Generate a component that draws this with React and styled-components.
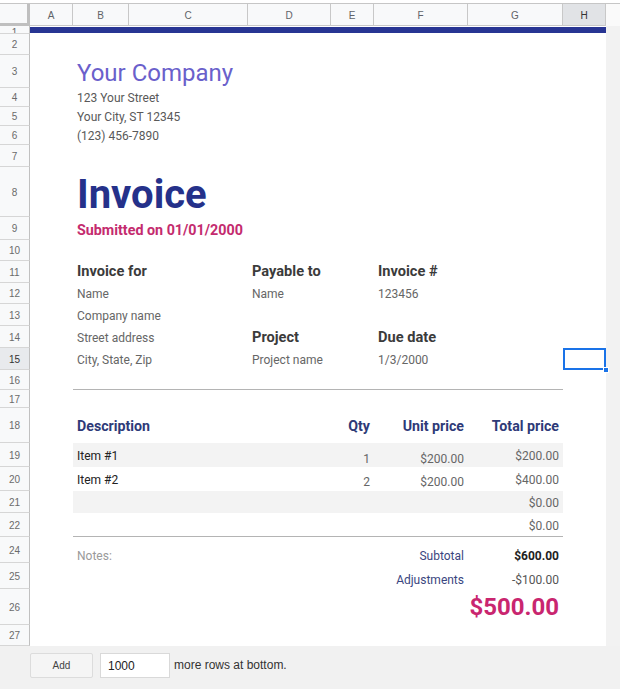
import React from 'react';
import styled, { createGlobalStyle } from 'styled-components';

const Global = createGlobalStyle`
  html, body { margin: 0; padding: 0; background: #fff; }
  body {
    width: 620px; height: 689px; overflow: hidden;
    font-family: Roboto, "Liberation Sans", Arial, sans-serif;
  }
  * { box-sizing: border-box; }
`;

const COLS = [30, 43, 56, 119, 83, 43, 94, 95, 43, 14];
const ROWS = [4, 22, 8, 21, 33, 19, 19, 19, 22, 50, 23, 21, 22, 21, 22, 22, 22, 20, 18, 35, 24, 24, 22, 24, 26, 26, 36, 21, 43];
const ROW_LABELS = [1, 2, 3, 4, 5, 6, 7, 8, 9, 10, 11, 12, 13, 14, 15, 16, 17, 18, 19, 20, 21, 22, 24, 25, 26, 27];
const LETTERS = ['A', 'B', 'C', 'D', 'E', 'F', 'G', 'H'];
const COL = { A: 2, B: 3, C: 4, D: 5, E: 6, F: 7, G: 8, H: 9 };
const gr = (n) => (n <= 22 ? n + 2 : n + 1);

const Sheet = styled.div`
  display: grid;
  grid-template-columns: ${COLS.map((c) => `${c}px`).join(' ')};
  grid-template-rows: ${ROWS.map((r) => `${r}px`).join(' ')};
  width: 620px;
  height: 689px;
  background: #f1f1f1;
`;

const TopStrip = styled.div`
  grid-column: 1 / -1;
  grid-row: 1;
  background: #fff;
  border-bottom: 1px solid #c6c6c6;
`;

const Corner = styled.div`
  grid-column: 1;
  grid-row: 2;
  background: #f8f9fa;
  border-right: 3px solid #bfbfbf;
  border-bottom: 3px solid #bfbfbf;
`;

const ColHead = styled.div`
  grid-column: ${(p) => p.$col};
  grid-row: 2;
  display: flex;
  align-items: center;
  justify-content: center;
  background: ${(p) => (p.$active ? '#e1e3e6' : '#f8f9fa')};
  border-right: 1px solid #c8c8c8;
  border-bottom: 1px solid #c8c8c8;
  font-family: "Liberation Sans", Arial, sans-serif;
  font-size: 10px;
  color: ${(p) => (p.$active ? '#333' : '#5f6368')};
  padding-top: 1px;
`;

const GutterHead = styled.div`
  grid-column: 10;
  grid-row: 2;
  background: #fafafa;
`;

const RowHead = styled.div`
  grid-column: 1;
  grid-row: ${(p) => p.$row};
  display: flex;
  align-items: ${(p) => (p.$tiny ? 'flex-start' : 'center')};
  justify-content: center;
  overflow: hidden;
  padding-top: ${(p) => (p.$tiny ? '5px' : '1px')};
  line-height: ${(p) => (p.$tiny ? '3px' : 'normal')};
  background: ${(p) => (p.$active ? '#e8eaed' : '#f8f9fa')};
  border-right: 1px solid #c0c0c0;
  border-bottom: 1px solid #d6d6d6;
  font-family: "Liberation Sans", Arial, sans-serif;
  font-size: 10px;
  color: ${(p) => (p.$active ? '#333' : '#6b6b6b')};
`;

const Paper = styled.div`
  grid-column: 2 / 10;
  grid-row: 3 / 29;
  background: #fff;
`;

const Gutter = styled.div`
  grid-column: 10;
  grid-row: 3 / 29;
  background: #f2f2f2;
`;

const Banner = styled.div`
  grid-column: 2 / 10;
  grid-row: 3;
  margin-top: 1px;
  height: 6px;
  background: #283593;
`;

const Band = styled.div`
  grid-column: 3 / 9;
  grid-row: ${(p) => p.$row};
  background: #f3f3f3;
`;

const Rule = styled.div`
  grid-column: 3 / 9;
  grid-row: ${(p) => p.$row};
  border-bottom: 1px solid #b4b4b4;
`;

const Cell = styled.div`
  grid-column: ${(p) => p.$col};
  grid-row: ${(p) => p.$row};
  display: flex;
  align-items: ${(p) => (p.$v === 'bottom' ? 'flex-end' : 'center')};
  justify-content: ${(p) => (p.$right ? 'flex-end' : 'flex-start')};
  padding: ${(p) => (p.$pt != null ? `${p.$pt}px` : '2px')} 4px ${(p) => (p.$pb != null ? `${p.$pb}px` : '0')};
  white-space: nowrap;
  min-width: 0;
  line-height: 1.2;
`;

const CompanyName = styled.span`
  font-size: 24px;
  color: #6a60cb;
`;

const AddressLine = styled.span`
  font-size: 12px;
  color: #595959;
`;

const Title = styled.span`
  font-size: 40px;
  font-weight: 700;
  color: #25318a;
`;

const Submitted = styled.span`
  font-size: 14.3px;
  font-weight: 700;
  color: #c42b6e;
`;

const Label = styled.span`
  font-size: 14.6px;
  font-weight: 700;
  color: #3b3b3b;
`;

const Value = styled.span`
  font-size: 12px;
  color: #666;
`;

const ColTitle = styled.span`
  font-size: 14.2px;
  font-weight: 700;
  color: #2e3a78;
`;

const ItemText = styled.span`
  font-size: 12px;
  color: #222;
`;

const Num = styled.span`
  font-size: 12px;
  color: #666;
`;

const SumLabel = styled.span`
  font-size: 12px;
  color: #3a4680;
`;

const SumValue = styled.span`
  font-size: 12px;
  font-weight: ${(p) => (p.$bold ? 700 : 400)};
  color: ${(p) => (p.$bold ? '#222' : '#555')};
`;

const Grand = styled.span`
  font-size: 24px;
  font-weight: 700;
  color: #c9266f;
`;

const Note = styled.span`
  font-size: 12px;
  color: #9a9a9a;
`;

const Selection = styled.div`
  grid-column: 9;
  grid-row: ${gr(15)};
  position: relative;
  border: 2px solid #1a73e8;
`;

const Handle = styled.span`
  position: absolute;
  right: -5px;
  bottom: -5px;
  width: 6px;
  height: 6px;
  background: #1a73e8;
  border: 1px solid #fff;
`;

const BottomBar = styled.div`
  grid-column: 1 / -1;
  grid-row: 29;
  display: flex;
  align-items: flex-start;
  padding: 7px 0 0 30px;
  gap: 7px;
  background: #f1f1f1;
  font-family: "Liberation Sans", Arial, sans-serif;
`;

const AddButton = styled.div`
  width: 63px;
  height: 25px;
  display: flex;
  align-items: center;
  justify-content: center;
  background: #f5f5f5;
  border: 1px solid #dcdcdc;
  border-radius: 2px;
  font-size: 10px;
  color: #444;
`;

const RowsInput = styled.div`
  width: 70px;
  height: 25px;
  display: flex;
  align-items: center;
  padding-left: 7px;
  background: #fff;
  border: 1px solid #d9d9d9;
  font-size: 12px;
  color: #222;
`;

const BarText = styled.span`
  font-size: 12px;
  color: #333;
  line-height: 25px;
  margin-left: -3px;
`;

export default function App() {
  return (
    <>
      <Global />
      <Sheet>
        <TopStrip />
        <Corner />
        {LETTERS.map((l, i) => (
          <ColHead key={l} $col={i + 2} $active={l === 'H'}>{l}</ColHead>
        ))}
        <GutterHead />
        {ROW_LABELS.map((n) => (
          <RowHead key={n} $row={gr(n)} $active={n === 15} $tiny={n === 1}>{n}</RowHead>
        ))}
        <Paper />
        <Gutter />
        <Banner />

        <Cell $col={COL.B} $row={gr(3)} $v="bottom" $pb={0}><CompanyName>Your Company</CompanyName></Cell>
        <Cell $col={COL.B} $row={gr(4)}><AddressLine>123 Your Street</AddressLine></Cell>
        <Cell $col={COL.B} $row={gr(5)}><AddressLine>Your City, ST 12345</AddressLine></Cell>
        <Cell $col={COL.B} $row={gr(6)}><AddressLine>(123) 456-7890</AddressLine></Cell>

        <Cell $col={COL.B} $row={gr(8)} $pt={6}><Title>Invoice</Title></Cell>
        <Cell $col={COL.B} $row={gr(9)} $pt={4}><Submitted>Submitted on 01/01/2000</Submitted></Cell>

        <Cell $col={COL.B} $row={gr(11)} $pt={0}><Label>Invoice for</Label></Cell>
        <Cell $col={COL.D} $row={gr(11)} $pt={0}><Label>Payable to</Label></Cell>
        <Cell $col={COL.F} $row={gr(11)} $pt={0}><Label>Invoice #</Label></Cell>
        <Cell $col={COL.B} $row={gr(12)}><Value>Name</Value></Cell>
        <Cell $col={COL.D} $row={gr(12)}><Value>Name</Value></Cell>
        <Cell $col={COL.F} $row={gr(12)}><Value>123456</Value></Cell>
        <Cell $col={COL.B} $row={gr(13)}><Value>Company name</Value></Cell>
        <Cell $col={COL.B} $row={gr(14)}><Value>Street address</Value></Cell>
        <Cell $col={COL.D} $row={gr(14)}><Label>Project</Label></Cell>
        <Cell $col={COL.F} $row={gr(14)}><Label>Due date</Label></Cell>
        <Cell $col={COL.B} $row={gr(15)}><Value>City, State, Zip</Value></Cell>
        <Cell $col={COL.D} $row={gr(15)}><Value>Project name</Value></Cell>
        <Cell $col={COL.F} $row={gr(15)}><Value>1/3/2000</Value></Cell>
        <Selection><Handle /></Selection>

        <Rule $row={gr(16)} />

        <Cell $col={COL.B} $row={gr(18)}><ColTitle>Description</ColTitle></Cell>
        <Cell $col={COL.E} $row={gr(18)} $right><ColTitle>Qty</ColTitle></Cell>
        <Cell $col={COL.F} $row={gr(18)} $right><ColTitle>Unit price</ColTitle></Cell>
        <Cell $col={COL.G} $row={gr(18)} $right><ColTitle>Total price</ColTitle></Cell>

        <Band $row={gr(19)} />
        <Band $row={gr(21)} />

        <Cell $col={COL.B} $row={gr(19)}><ItemText>Item #1</ItemText></Cell>
        <Cell $col={COL.E} $row={gr(19)} $right $v="bottom" $pb={1}><Num>1</Num></Cell>
        <Cell $col={COL.F} $row={gr(19)} $right $v="bottom" $pb={1}><Num>$200.00</Num></Cell>
        <Cell $col={COL.G} $row={gr(19)} $right><Num>$200.00</Num></Cell>

        <Cell $col={COL.B} $row={gr(20)}><ItemText>Item #2</ItemText></Cell>
        <Cell $col={COL.E} $row={gr(20)} $right $v="bottom" $pb={2}><Num>2</Num></Cell>
        <Cell $col={COL.F} $row={gr(20)} $right $v="bottom" $pb={2}><Num>$200.00</Num></Cell>
        <Cell $col={COL.G} $row={gr(20)} $right><Num>$400.00</Num></Cell>

        <Cell $col={COL.G} $row={gr(21)} $right><Num>$0.00</Num></Cell>
        <Cell $col={COL.G} $row={gr(22)} $right><Num>$0.00</Num></Cell>

        <Rule $row={gr(22)} />

        <Cell $col={COL.B} $row={gr(24)} $v="bottom" $pb={0}><Note>Notes:</Note></Cell>
        <Cell $col={COL.F} $row={gr(24)} $right $v="bottom" $pb={0}><SumLabel>Subtotal</SumLabel></Cell>
        <Cell $col={COL.G} $row={gr(24)} $right $v="bottom" $pb={0}><SumValue $bold>$600.00</SumValue></Cell>
        <Cell $col={COL.F} $row={gr(25)} $right $v="bottom" $pb={2}><SumLabel>Adjustments</SumLabel></Cell>
        <Cell $col={COL.G} $row={gr(25)} $right $v="bottom" $pb={2}><SumValue>-$100.00</SumValue></Cell>
        <Cell $col={COL.G} $row={gr(26)} $right $pt={0}><Grand>$500.00</Grand></Cell>

        <BottomBar>
          <AddButton>Add</AddButton>
          <RowsInput>1000</RowsInput>
          <BarText>more rows at bottom.</BarText>
        </BottomBar>
      </Sheet>
    </>
  );
}
